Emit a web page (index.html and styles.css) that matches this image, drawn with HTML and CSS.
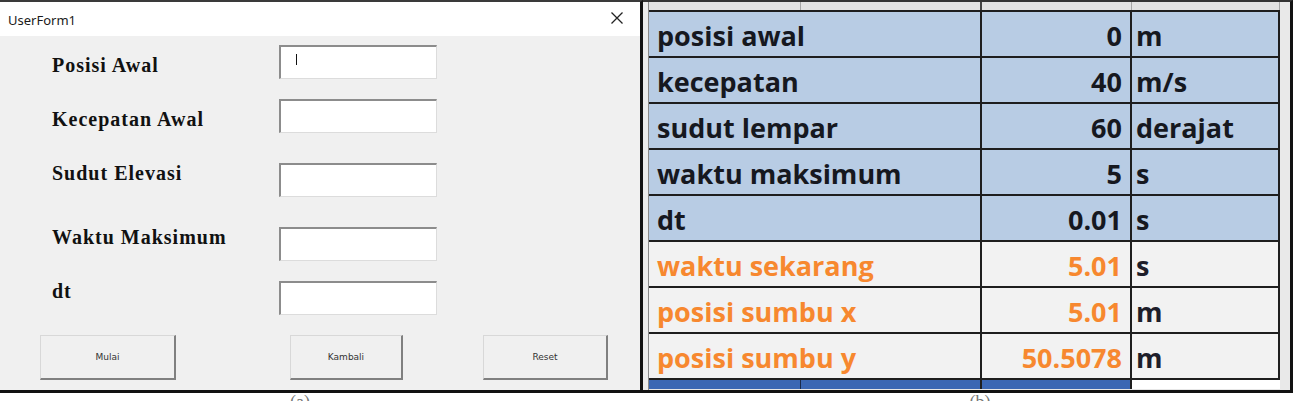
FILE: index.html
```html
<!DOCTYPE html>
<html lang="id">
<head>
    <meta charset="UTF-8">
    <meta name="viewport" content="width=device-width, initial-scale=1.0">
    <title>Gerak Parabola</title>
    <link rel="stylesheet" href="styles.css">
</head>
<body>
    <div class="screen">
        <div class="form">
            <div class="titlebar">
                <span class="title">UserForm1</span>
                <svg class="close" width="14" height="12" viewBox="0 0 14 12">
                    <path d="M1.5 0.5 L12.5 11.5 M12.5 0.5 L1.5 11.5" stroke="#222" stroke-width="1.3" fill="none"/>
                </svg>
            </div>
            <div class="form-body">
                <div class="field low">
                    <label>Posisi Awal</label>
                    <div class="textbox"><span class="caret"></span></div>
                </div>
                <div class="field low spaced">
                    <label>Kecepatan Awal</label>
                    <div class="textbox"></div>
                </div>
                <div class="field high spaced">
                    <label>Sudut Elevasi</label>
                    <div class="textbox"></div>
                </div>
                <div class="field high">
                    <label>Waktu Maksimum</label>
                    <div class="textbox"></div>
                </div>
                <div class="field high">
                    <label>dt</label>
                    <div class="textbox"></div>
                </div>
                <div class="buttons">
                    <button class="btn btn-start">Mulai</button>
                    <button class="btn btn-back">Kambali</button>
                    <button class="btn btn-reset">Reset</button>
                </div>
            </div>
        </div>

        <div class="sheet">
            <div class="rowhead"></div>
            <div class="table">
                <div class="colhead">
                    <span></span><span></span><span></span><span></span>
                </div>
                <div class="row input">
                    <div class="cell name">posisi awal</div>
                    <div class="cell value">0</div>
                    <div class="cell unit">m</div>
                </div>
                <div class="row input">
                    <div class="cell name">kecepatan</div>
                    <div class="cell value">40</div>
                    <div class="cell unit">m/s</div>
                </div>
                <div class="row input">
                    <div class="cell name">sudut lempar</div>
                    <div class="cell value">60</div>
                    <div class="cell unit">derajat</div>
                </div>
                <div class="row input">
                    <div class="cell name">waktu maksimum</div>
                    <div class="cell value">5</div>
                    <div class="cell unit">s</div>
                </div>
                <div class="row input">
                    <div class="cell name">dt</div>
                    <div class="cell value">0.01</div>
                    <div class="cell unit">s</div>
                </div>
                <div class="row output">
                    <div class="cell name">waktu sekarang</div>
                    <div class="cell value">5.01</div>
                    <div class="cell unit">s</div>
                </div>
                <div class="row output">
                    <div class="cell name">posisi sumbu x</div>
                    <div class="cell value">5.01</div>
                    <div class="cell unit">m</div>
                </div>
                <div class="row output">
                    <div class="cell name">posisi sumbu y</div>
                    <div class="cell value">50.5078</div>
                    <div class="cell unit">m</div>
                </div>
                <div class="footer-strip">
                    <span></span><span></span><span></span><span></span>
                </div>
            </div>
            <div class="gutter"></div>
        </div>
    </div>
    <div class="captions">
        <span class="cap-a">(a)</span>
        <span class="cap-b">(b)</span>
    </div>
</body>
</html>
```

FILE: styles.css
```css
body {
    margin: 0;
    width: 1302px;
    height: 401px;
    overflow: hidden;
    background-color: #ffffff;
    font-family: "Liberation Sans", Arial, sans-serif;
}
.screen {
    display: flex;
    height: 393px;
}

/* userform */
.form {
    width: 640px;
    height: 388px;
    border-top: 2px solid #3a3a3a;
    border-right: 3px solid #121212;
    border-bottom: 3px solid #121212;
    display: flex;
    flex-direction: column;
    background-color: #f0f0f0;
}
.titlebar {
    height: 34px;
    background-color: #ffffff;
    display: flex;
    align-items: center;
    justify-content: space-between;
    padding: 0 16px 0 8px;
}
.title {
    font-family: "Noto Sans", sans-serif;
    font-size: 13px;
    color: #1a1a1a;
    margin-top: 2px;
}
.close {
    margin-top: -2px;
}
.form-body {
    flex: 1;
    padding: 9px 0 0 52px;
    display: flex;
    flex-direction: column;
}
.field {
    display: flex;
    align-items: center;
    height: 34px;
    margin-bottom: 20px;
}
.field.spaced {
    margin-bottom: 30px;
}
.field label {
    width: 227px;
    font-family: "Liberation Serif", "Times New Roman", serif;
    font-weight: bold;
    font-size: 20px;
    letter-spacing: 1px;
    color: #111;
}
.field.low label {
    margin-top: 6px;
}
.field.high label {
    margin-bottom: 13px;
}
.textbox {
    width: 158px;
    height: 34px;
    background-color: #ffffff;
    border-top: 2px solid #8c8c8c;
    border-left: 2px solid #8c8c8c;
    border-right: 1px solid #dcdcdc;
    border-bottom: 1px solid #dcdcdc;
    padding: 4px 0 0 15px;
    box-sizing: border-box;
}
.caret {
    display: inline-block;
    width: 1px;
    height: 11px;
    background-color: #111;
}
.buttons {
    display: flex;
    margin-left: -12px;
}
.btn {
    height: 45px;
    background-color: #f0f0f0;
    border-top: 1px solid #d8d8d8;
    border-left: 1px solid #d8d8d8;
    border-right: 2px solid #808080;
    border-bottom: 2px solid #808080;
    font-family: "DejaVu Sans", sans-serif;
    font-size: 9px;
    color: #333;
    padding: 0;
}
.btn-start {
    width: 136px;
}
.btn-back {
    width: 113px;
    margin-left: 114px;
}
.btn-reset {
    width: 125px;
    margin-left: 80px;
}

/* spreadsheet */
.sheet {
    width: 647px;
    height: 388px;
    border-top: 2px solid #333;
    border-right: 3px solid #121212;
    border-bottom: 3px solid #121212;
    background-color: #e6e6e6;
    display: flex;
}
.rowhead {
    width: 5px;
    background-color: #ececec;
}
.table {
    width: 632px;
    border-left: 1px solid #8a8a8a;
    box-sizing: border-box;
    display: flex;
    flex-direction: column;
}
.colhead {
    height: 8px;
    display: grid;
    grid-template-columns: 152px 181px 150px 148px;
    background-color: #e2e2e2;
}
.colhead span {
    border-right: 1px solid #a6a6a6;
}
.colhead span:nth-child(2) {
    border-right: 2px solid #444;
}
.row {
    display: grid;
    grid-template-columns: 333px 150px 148px;
    height: 44px;
    border-bottom: 2px solid #1e1e1e;
    font-family: "Open Sans", sans-serif;
    font-weight: bold;
    font-size: 27px;
}
.colhead + .row {
    border-top: 2px solid #1e1e1e;
}
.row.input {
    background-color: #b8cce4;
    color: #16181f;
}
.row.output {
    background-color: #f2f2f2;
    color: #f7882f;
}
.cell {
    display: flex;
    align-items: center;
    white-space: nowrap;
    line-height: 1;
    padding-top: 2px;
}
.cell.name {
    padding-left: 8px;
    border-right: 2px solid #1e1e1e;
}
.cell.value {
    justify-content: flex-end;
    padding-right: 8px;
    border-right: 2px solid #1e1e1e;
}
.cell.unit {
    padding-left: 4px;
    border-right: 2px solid #1e1e1e;
}
.row.output .unit {
    color: #1e1e2a;
}
.footer-strip {
    height: 9px;
    display: grid;
    grid-template-columns: 152px 181px 150px 148px;
}
.footer-strip span {
    background-color: #3b67b3;
}
.footer-strip span:first-child {
    border-right: 1px solid #1a2a4a;
}
.footer-strip span:nth-child(2) {
    border-right: 2px solid #1e1e1e;
}
.footer-strip span:nth-child(3) {
    border-right: 2px solid #1e1e1e;
}
.footer-strip span:last-child {
    background-color: #ffffff;
}
.gutter {
    width: 10px;
    background-color: #e9e9e9;
}

.captions {
    height: 8px;
    overflow: hidden;
    font-family: "Liberation Serif", serif;
    font-size: 18px;
    line-height: 18px;
    color: #777;
}
.cap-a {
    margin-left: 290px;
}
.cap-b {
    margin-left: 655px;
}
```
